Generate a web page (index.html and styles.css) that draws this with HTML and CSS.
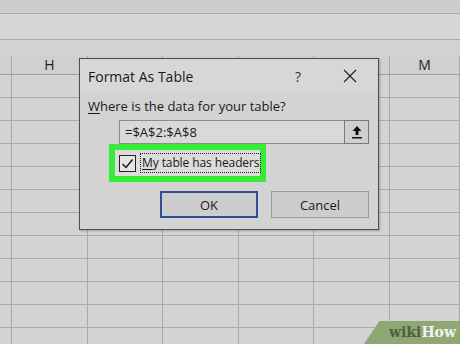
FILE: index.html
```html
<!DOCTYPE html>
<html lang="en">
<head>
  <meta charset="UTF-8" />
  <title>Format As Table</title>
  <link rel="stylesheet" href="styles.css">
</head>
<body>

  <!-- Лента и строка формул -->
  <div class="ribbon"></div>
  <div class="formula-bar"></div>
  <div class="gap"></div>

  <!-- Сетка листа -->
  <div class="sheet">
    <div class="row head">
      <div class="cell"></div>
      <div class="cell">H</div>
      <div class="cell"></div>
      <div class="cell"></div>
      <div class="cell"></div>
      <div class="cell"></div>
      <div class="cell">M</div>
    </div>
  </div>

  <!-- Диалог -->
  <div class="dialog">
    <div class="title-bar">
      <span class="title">Format As Table</span>
      <span class="help">?</span>
      <svg class="close" width="14" height="14" viewBox="0 0 14 14">
        <path d="M1 1L13 13M13 1L1 13" stroke="#222" stroke-width="1.2" fill="none"/>
      </svg>
    </div>
    <div class="body">
      <p class="question"><u>W</u>here is the data for your table?</p>
      <div class="range">
        <div class="range-input">=$A$2:$A$8</div>
        <div class="range-btn">
          <svg width="12" height="14" viewBox="0 0 12 14">
            <path d="M6 1L1.5 6H4.5V10H7.5V6H10.5Z" fill="#111"/>
            <rect x="1" y="12" width="10" height="1.5" fill="#111"/>
          </svg>
        </div>
      </div>
      <div class="highlight">
        <span class="checkbox">
          <svg width="15" height="15" viewBox="0 0 15 15">
            <path d="M2.5 8L6 11.5L12.5 3.5" stroke="#111" stroke-width="1.4" fill="none"/>
          </svg>
        </span>
        <span class="label"><u>M</u>y table has headers</span>
      </div>
      <div class="buttons">
        <button class="btn ok">OK</button>
        <button class="btn">Cancel</button>
      </div>
    </div>
  </div>

  <div class="wikihow"><span class="wiki">wiki</span>How</div>

  <script>
    // строки листа
    const sheet = document.querySelector(".sheet");
    for (let i = 0; i < 12; i++) {
      const row = document.createElement("div");
      row.className = "row";
      for (let j = 0; j < 7; j++) {
        const c = document.createElement("div");
        c.className = "cell";
        row.appendChild(c);
      }
      sheet.appendChild(row);
    }
  </script>

</body>
</html>
```

FILE: styles.css
```css
body {
  margin: 0;
  width: 460px;
  height: 344px;
  overflow: hidden;
  background-color: #d3d3d3;
  font-family: 'Open Sans', 'Noto Sans', sans-serif;
  position: relative;
}

.ribbon {
  height: 13px;
  background-color: #cdcdcd;
  border-bottom: 1px solid #a9a9a9;
}

.formula-bar {
  height: 25px;
  background-color: #d6d6d6;
  border-bottom: 1px solid #a9a9a9;
}

.gap {
  height: 16px;
  background-color: #d2d2d2;
}

.row {
  display: grid;
  grid-template-columns: 12px 76px 75px 76px 75px 76px 1fr;
  height: 23px;
  border-bottom: 1px solid #ababab;
  box-sizing: border-box;
}

.row.head {
  height: 19px;
  border-bottom: 1px solid #9c9c9c;
  background-color: #d0d0d0;
}

.cell {
  border-right: 1px solid #a9a9a9;
  font-size: 14px;
  color: #222;
  text-align: center;
  line-height: 18px;
}

.dialog {
  position: absolute;
  left: 79px;
  top: 58px;
  width: 300px;
  height: 172px;
  box-sizing: border-box;
  border: 1px solid #4d4d4d;
  background-color: #d3d3d3;
  box-shadow: 1px 1px 2px rgba(0, 0, 0, 0.25);
}

.title-bar {
  height: 34px;
  display: flex;
  align-items: center;
  padding-left: 8px;
  background-color: #d7d7d7;
}

.title {
  font-size: 14px;
  color: #1a1a1a;
  flex: 1;
}

.help {
  font-size: 14px;
  color: #333;
  margin-right: 42px;
}

.close {
  margin-right: 21px;
}

.body {
  padding: 0 8px;
}

.question {
  margin: 4px 0 0;
  font-size: 13px;
  color: #1a1a1a;
  line-height: 18px;
}

.question u, .label u {
  text-decoration-thickness: 1px;
  text-underline-offset: 2px;
}

.range {
  display: flex;
  margin: 5px 0 0 31px;
  height: 24px;
}

.range-input {
  width: 225px;
  box-sizing: border-box;
  border: 1px solid #8c8c8c;
  border-right: none;
  background-color: #d9d9d9;
  font-size: 13px;
  line-height: 22px;
  padding-left: 5px;
  color: #1a1a1a;
}

.range-btn {
  width: 25px;
  box-sizing: border-box;
  border: 1px solid #7a7a7a;
  background-color: #cfcfcf;
  display: flex;
  align-items: center;
  justify-content: center;
}

.highlight {
  display: flex;
  align-items: center;
  gap: 4px;
  width: 157px;
  height: 38px;
  box-sizing: border-box;
  margin-left: 21px;
  border: 6px solid #36ec36;
  background-color: #dcdcdc;
  padding-left: 4px;
}

.checkbox {
  width: 15px;
  height: 15px;
  flex-shrink: 0;
  border: 1px solid #222;
  background-color: #e6e6e6;
  display: flex;
}

.label {
  font-size: 12px;
  letter-spacing: -0.1px;
  white-space: nowrap;
  color: #1a1a1a;
  border: 1px dotted #222;
  padding: 1px 1px;
  line-height: 16px;
}

.buttons {
  display: flex;
  justify-content: flex-end;
  gap: 13px;
  margin-top: 9px;
  padding-right: 1px;
}

.btn {
  width: 98px;
  height: 27px;
  font-family: inherit;
  font-size: 13px;
  color: #1a1a1a;
  background-color: #cdcdcd;
  border: 1px solid #9a9a9a;
  padding: 0;
}

.btn.ok {
  border: 2px solid #2f4f92;
}

.wikihow {
  position: absolute;
  right: 0;
  bottom: 0;
  width: 96px;
  height: 23px;
  background-color: #8ea775;
  clip-path: polygon(16% 0, 100% 0, 100% 100%, 0 100%);
  font-family: 'DejaVu Serif', serif;
  font-weight: bold;
  font-size: 14px;
  color: #f2f2f2;
  text-align: right;
  padding-right: 4px;
  box-sizing: border-box;
  line-height: 23px;
}

.wiki {
  color: #4f5f41;
}
```
